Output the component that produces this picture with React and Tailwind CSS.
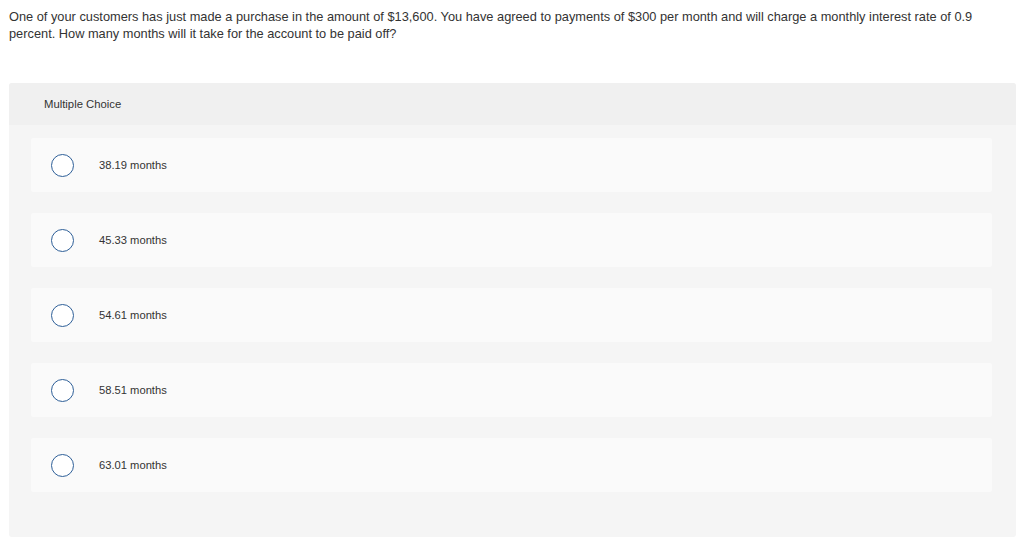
import React from "react";

const options = ["38.19 months", "45.33 months", "54.61 months", "58.51 months", "63.01 months"];

export default function App() {
  return (
    <div className="w-[1024px] h-[550px] bg-white text-[#333] overflow-hidden" style={{ fontFamily: "'Liberation Sans', Arial, sans-serif" }}>
      <p className="ml-[9px] w-[980px] pt-[8px] text-[12.8px] leading-[17px]">
        One of your customers has just made a purchase in the amount of $13,600. You have agreed to payments of $300 per month and will charge a monthly interest rate of 0.9 percent. How many months will it take for the account to be paid off?
      </p>
      <div className="ml-[9px] mr-[8px] mt-[41px] h-[454px] rounded-[3px] bg-[#f5f5f5] overflow-hidden">
        <div className="h-[42px] bg-[#f0f0f0] pl-[35px] flex items-center text-[11.3px]">Multiple Choice</div>
        <div className="pt-[13px] pl-[22px] pr-[24px] flex flex-col gap-[21px]">
          {options.map((o) => (
            <div key={o} className="h-[54px] bg-[#fafafa] rounded-[2px] flex items-center">
              <span className="ml-[20px] w-[23px] h-[23px] rounded-full border-[1.5px] border-[#2e5f98] bg-white shrink-0" />
              <span className="ml-[25px] text-[11.2px]">{o}</span>
            </div>
          ))}
        </div>
      </div>
    </div>
  );
}
